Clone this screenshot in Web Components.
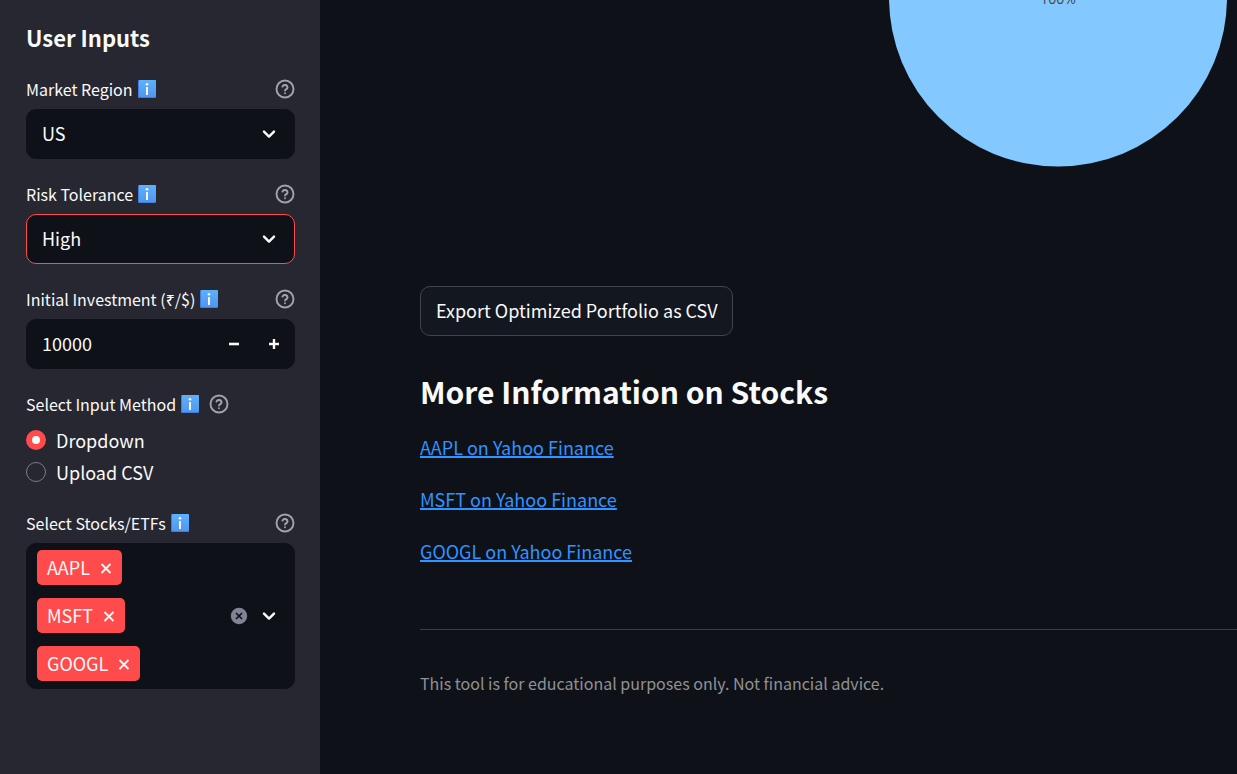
<!DOCTYPE html>
<html lang="en">
<head>
<meta charset="utf-8">
<title>Portfolio Optimizer</title>
<style>
  :root {
    --bg: #0e1117;
    --side: #262730;
    --text: #fafafa;
    --accent: #ff4b4b;
    --small: 16px;
    --body: 18px;
  }
  html, body { height: 100%; }
  body {
    margin: 0;
    background: var(--bg);
    color: var(--text);
    font-family: "Noto Sans CJK SC", "Noto Sans", sans-serif;
    font-size: var(--body);
    line-height: 30px;
  }
</style>
</head>
<body>
<app-shell>
  <side-panel slot="side" heading="User Inputs">
    <select-field label="Market Region" options="US,India" value="US"></select-field>
    <select-field label="Risk Tolerance" options="Low,Medium,High" value="High" active></select-field>
    <number-field label="Initial Investment (₹/$)" value="10000"></number-field>
    <radio-field label="Select Input Method" options="Dropdown,Upload CSV" value="Dropdown"></radio-field>
    <multi-field label="Select Stocks/ETFs" values="AAPL,MSFT,GOOGL"></multi-field>
  </side-panel>
  <pie-chart></pie-chart>
  <export-button>Export Optimized Portfolio as CSV</export-button>
  <stock-links heading="More Information on Stocks" symbols="AAPL,MSFT,GOOGL"></stock-links>
  <page-note>This tool is for educational purposes only. Not financial advice.</page-note>
</app-shell>

<script>
const base = `
  *, *::before, *::after { box-sizing: border-box; }
  :host { display: block; }
  button, input, select { font: inherit; color: inherit; margin: 0; border: 0; padding: 0; background: none; }
  button { cursor: pointer; }
  svg { display: block; flex: none; }
`;
const fieldCss = base + `
  .head { display: flex; align-items: center; justify-content: space-between; height: 30px; margin-bottom: 5px; }
  .head label, .head .label { display: flex; align-items: center; gap: 5px; padding-bottom: 1px; font-size: var(--small); white-space: nowrap; }
  .box { display: flex; align-items: center; position: relative; min-height: 50px; border: 1px solid var(--bg); border-radius: 10px; background: var(--bg); }
`;
const chevron = `<svg width="20" height="20" viewBox="0 0 20 20" fill="none" stroke="#fafafa" stroke-width="2.4" stroke-linecap="round" stroke-linejoin="round"><path d="M5 7.6l5 5 5-5"/></svg>`;
const list = (el, name) => el.getAttribute(name).split(",");

function define(name, render) {
  customElements.define(name, class extends HTMLElement {
    connectedCallback() {
      if (this.shadowRoot) return;
      this.attachShadow({ mode: "open" }).innerHTML = render(this);
      const input = this.shadowRoot.querySelector("input[type=number]");
      if (input) this.shadowRoot.querySelectorAll("[data-step]").forEach(b =>
        b.addEventListener("click", () => { input.value = +input.value + +b.dataset.step; }));
    }
  });
}

define("info-mark", () => `<style>${base}</style>
  <svg width="18" height="18" viewBox="0 0 18 18" role="img" aria-label="Information">
    <defs><linearGradient id="g" x2="0" y2="1"><stop stop-color="#5eb1fb"/><stop offset="1" stop-color="#5097ee"/></linearGradient></defs>
    <rect width="18" height="18" rx="1" fill="#3f7de0"/><rect x="1" width="17" height="17" rx="1" fill="url(#g)"/>
    <circle cx="9" cy="4.2" r="1.3" fill="#f5f4ff"/><rect x="8" y="7" width="2" height="8" fill="#f5f4ff"/>
  </svg>`);

define("help-button", () => `<style>${base} button { display: block; }</style>
  <button type="button" aria-label="Help">
    <svg width="20" height="20" viewBox="0 0 20 20" fill="none" stroke="#a3a4a9" stroke-width="1.9" stroke-linecap="round" stroke-linejoin="round">
      <circle cx="10" cy="10" r="8.5"/><path d="M7.5 7.6a2.6 2.6 0 0 1 5 .8c0 1.7-2.5 2.1-2.5 3.2"/><path d="M10 14.2h.01"/>
    </svg>
  </button>`);

define("app-shell", () => `<style>${base}
  :host { display: grid; grid-template-columns: 320px minmax(0, 1fr); min-height: 100%; }
  aside { background: var(--side); padding: 22px 25px 40px 26px; }
  main { padding-left: 100px; }
  </style><aside><slot name="side"></slot></aside><main><slot></slot></main>`);

define("side-panel", el => `<style>${base}
  h2 { margin: 0 0 22px; font-size: 22px; font-weight: 700; line-height: 30px; }
  .fields { display: grid; grid-template-columns: minmax(0, 1fr); gap: 20px; }
  </style><h2>${el.getAttribute("heading")}</h2><div class="fields"><slot></slot></div>`);

define("select-field", el => `<style>${fieldCss}
  :host([active]) .box { border-color: var(--accent); }
  select { appearance: none; width: 100%; height: 48px; padding: 0 45px 2px 15px; outline: 0; }
  option { background: var(--bg); }
  .box svg { position: absolute; right: 15px; pointer-events: none; }
  </style>
  <div class="head"><label for="c">${el.getAttribute("label")}<info-mark></info-mark></label><help-button></help-button></div>
  <div class="box"><select id="c">${list(el, "options").map(o =>
    `<option${o === el.getAttribute("value") ? " selected" : ""}>${o}</option>`).join("")}</select>${chevron}</div>`);

define("number-field", el => `<style>${fieldCss}
  input { flex: 1; width: 0; min-width: 0; height: 48px; padding: 0 0 2px 15px; appearance: textfield; outline: 0; }
  input::-webkit-inner-spin-button { appearance: none; }
  .box button { display: grid; place-items: center; width: 40px; height: 48px; }
  </style>
  <div class="head"><label for="c">${el.getAttribute("label")}<info-mark></info-mark></label><help-button></help-button></div>
  <div class="box"><input id="c" type="number" value="${el.getAttribute("value")}">
    <button type="button" data-step="-1" aria-label="Decrease"><svg width="10" height="10" viewBox="0 0 10 10"><path d="M0 5h10" stroke="#fafafa" stroke-width="2.6"/></svg></button>
    <button type="button" data-step="1" aria-label="Increase"><svg width="10" height="10" viewBox="0 0 10 10"><path d="M0 5h10M5 0v10" stroke="#fafafa" stroke-width="2.4"/></svg></button>
  </div>`);

define("radio-field", el => `<style>${fieldCss}
  .head { justify-content: flex-start; gap: 10px; }
  .option { display: flex; align-items: center; gap: 10px; height: 32px; }
  input { appearance: none; width: 20px; height: 20px; border: 1px solid #7b7b83; border-radius: 50%; }
  input:checked { border: 6px solid var(--accent); background: var(--text); }
  </style>
  <div class="head"><span class="label" id="l">${el.getAttribute("label")}<info-mark></info-mark></span><help-button></help-button></div>
  <div role="radiogroup" aria-labelledby="l">${list(el, "options").map(o =>
    `<label class="option"><input type="radio" name="method"${o === el.getAttribute("value") ? " checked" : ""}>${o}</label>`).join("")}</div>`);

define("stock-tag", () => `<style>${base}
  :host { display: flex; align-items: center; gap: 10px; height: 35px; padding: 0 10px; border-radius: 5px; background: var(--accent); }
  .name { padding-bottom: 2px; }
  </style><span class="name"><slot></slot></span><button type="button" aria-label="Remove"><svg width="12" height="12" viewBox="0 0 12 12"><path d="M1.5 2l9 9M10.5 2l-9 9" stroke="#fafafa" stroke-width="1.8"/></svg></button>`);

define("multi-field", el => `<style>${fieldCss}
  .box { padding: 6px 15px 7px 10px; gap: 10px; }
  .tags { flex: 1; display: grid; justify-items: start; gap: 13px; }
  .box button { display: block; }
  </style>
  <div class="head"><span class="label" id="l">${el.getAttribute("label")}<info-mark></info-mark></span><help-button></help-button></div>
  <div class="box" role="group" aria-labelledby="l">
    <div class="tags">${list(el, "values").map(v => `<stock-tag>${v}</stock-tag>`).join("")}</div>
    <button type="button" aria-label="Clear all"><svg width="20" height="20" viewBox="0 0 20 20"><circle cx="10" cy="10" r="8.2" fill="#808495"/><path d="M7 7l6 6M13 7l-6 6" stroke="#0e1117" stroke-width="1.7"/></svg></button>
    <button type="button" aria-label="Open">${chevron}</button>
  </div>`);

define("pie-chart", () => `<style>${base}
  :host { display: flex; justify-content: flex-end; padding: 0 10px 119px 0; }
  </style>
  <svg width="338" height="167" viewBox="0 0 338 167" role="img" aria-label="Allocation">
    <circle cx="169" cy="-2.5" r="169" fill="#83c9ff"/>
    <text x="169" y="4" text-anchor="middle" font-family="Open Sans" font-size="14" fill="#444">100%</text>
  </svg>`);

define("export-button", () => `<style>${base}
  :host { display: flex; margin-bottom: 35px; }
  button { height: 50px; padding: 0 14px 2px 15px; border: 1px solid #41444b; border-radius: 10px; background: #131720; white-space: nowrap; }
  </style><button type="button"><slot></slot></button>`);

define("stock-links", el => `<style>${base}
  h2 { margin: 0 0 21px; font-size: 30px; font-weight: 700; line-height: 40px; }
  ul { display: grid; gap: 22px; margin: 0; padding: 0; list-style: none; }
  a { color: #2f94ff; text-decoration: underline; text-decoration-thickness: 2px; text-underline-offset: 1px; text-decoration-skip-ink: none; }
  </style><h2>${el.getAttribute("heading")}</h2>
  <ul>${list(el, "symbols").map(s =>
    `<li><a href="https://finance.yahoo.com/quote/${s}">${s} on Yahoo Finance</a></li>`).join("")}</ul>`);

define("page-note", () => `<style>${base}
  hr { margin: 63px 0 38px; border: 0; border-top: 1px solid #3b3d44; }
  p { margin: 0; font-size: var(--small); color: #909194; }
  </style><hr><p><slot></slot></p>`);
</script>
</body>
</html>
